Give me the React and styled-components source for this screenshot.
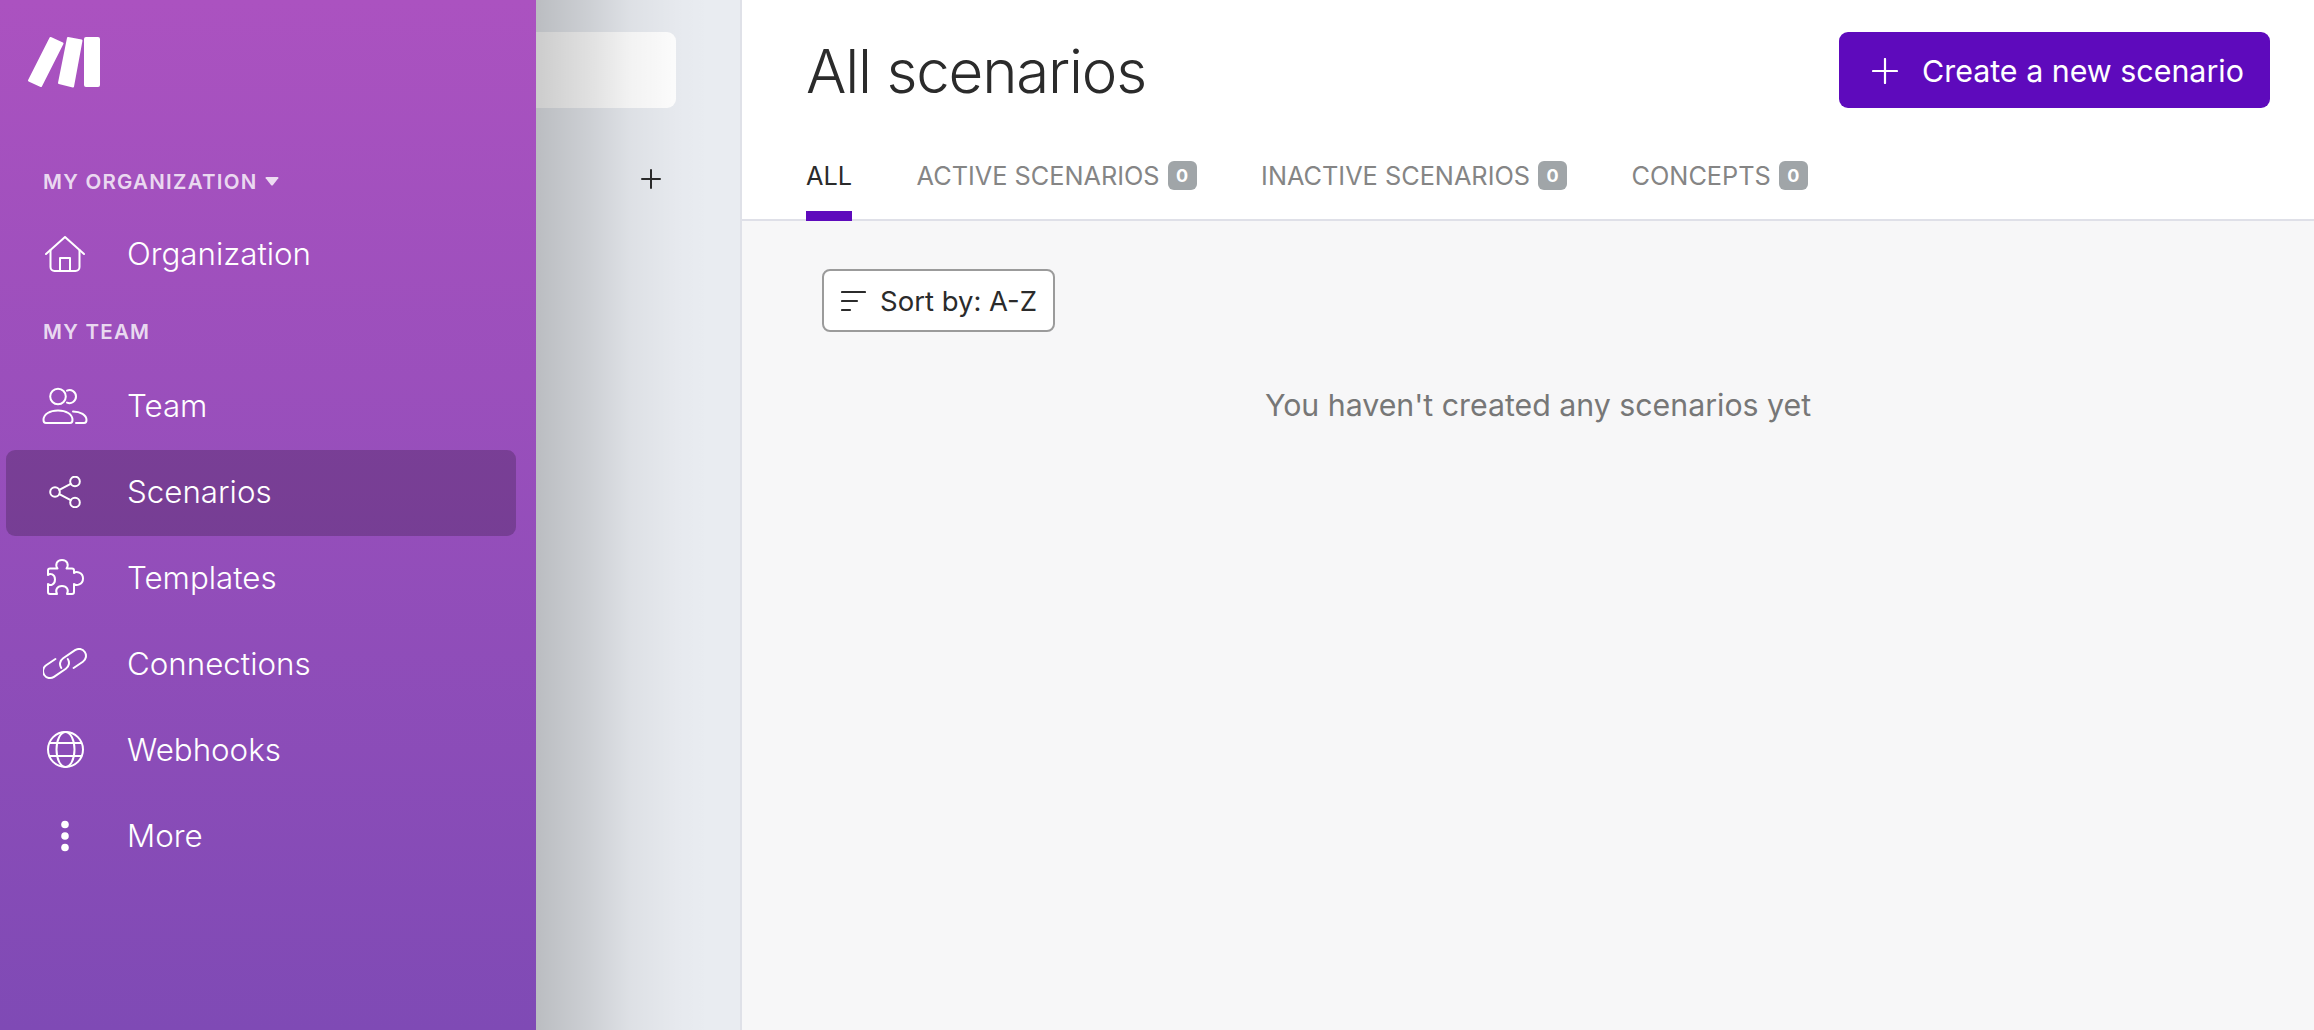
import styled, { createGlobalStyle } from 'styled-components';

const GlobalStyle = createGlobalStyle`
  html, body {
    margin: 0;
    height: 100%;
    overflow: hidden;
  }
  body {
    font-family: Inter, 'Liberation Sans', sans-serif;
    color: #2b2b2b;
  }
`;

const Page = styled.div`
  display: flex;
  width: 2314px;
  height: 1030px;
  overflow: hidden;
`;

const Sidebar = styled.aside`
  box-sizing: border-box;
  flex: 0 0 536px;
  height: 100%;
  padding: 36px 20px 0 6px;
  background: linear-gradient(180deg, #ab52c0 0%, #7f4ab5 100%);
  color: #fff;
`;

const Logo = styled.svg`
  display: block;
  width: 74px;
  height: 52px;
  margin-left: 21px;
  fill: #fff;
  stroke: #fff;
  stroke-width: 2;
  stroke-linejoin: round;
`;

const SectionLabel = styled.div`
  display: flex;
  align-items: center;
  gap: 7px;
  height: ${({ $height }) => $height}px;
  padding: ${({ $top }) => $top || 0}px 0 0 37px;
  box-sizing: border-box;
  font-size: 20.5px;
  font-weight: 600;
  letter-spacing: 1.25px;
  color: rgba(255, 255, 255, 0.8);
`;

const Caret = styled.svg`
  width: 14px;
  height: 9px;
  fill: rgba(255, 255, 255, 0.8);
`;

const NavList = styled.nav`
  display: flex;
  flex-direction: column;
`;

const NavItem = styled.a`
  display: flex;
  align-items: center;
  height: 86px;
  padding: 0 0 3px 36px;
  box-sizing: border-box;
  border-radius: 9px;
  background: ${({ $active }) => ($active ? 'rgba(0, 0, 0, 0.2)' : 'transparent')};
  font-size: 31.3px;
  font-weight: 300;
  color: #fff;
`;

const IconSlot = styled.span`
  display: flex;
  align-items: center;
  justify-content: center;
  flex: 0 0 46px;
  margin-right: 39px;
`;

const NavIcon = styled.svg`
  display: block;
  fill: none;
  stroke: #fff;
  stroke-width: 2;
  stroke-linecap: round;
  stroke-linejoin: round;
`;

const MiddlePanel = styled.section`
  position: relative;
  box-sizing: border-box;
  flex: 0 0 206px;
  height: 100%;
  padding-top: 32px;
  background: #e9ecf1;
  border-right: 2px solid #dfe1e8;

  &::after {
    content: '';
    position: absolute;
    inset: 0;
    background: linear-gradient(90deg, rgba(0, 0, 0, 0.2) 0%, rgba(0, 0, 0, 0.12) 26%, rgba(0, 0, 0, 0.05) 46%, rgba(0, 0, 0, 0.01) 70%, transparent 85%);
  }
`;

const SearchBox = styled.div`
  width: 140px;
  height: 76px;
  background: #fff;
  border-radius: 0 9px 9px 0;
`;

const AddFolder = styled.div`
  display: flex;
  justify-content: flex-end;
  padding: 61px 79px 0 0;
  line-height: 0;
`;

const Main = styled.main`
  flex: 1;
  display: flex;
  flex-direction: column;
  height: 100%;
  background: #f7f7f8;
`;

const Header = styled.header`
  box-sizing: border-box;
  height: 221px;
  padding: 32px 44px 0 64px;
  background: #fff;
  border-bottom: 2px solid #dfe0e8;
`;

const TitleRow = styled.div`
  display: flex;
  justify-content: space-between;
  align-items: flex-start;
`;

const Title = styled.h1`
  margin: 0;
  padding-top: 2px;
  font-size: 60px;
  line-height: 74px;
  font-weight: 300;
  letter-spacing: -1.2px;
  color: #2b2b2b;
`;

const PrimaryButton = styled.button`
  display: flex;
  align-items: center;
  gap: 24px;
  box-sizing: border-box;
  width: 431px;
  height: 76px;
  padding: 2px 0 0 33px;
  border: 0;
  border-radius: 9px;
  background: #5e0abc;
  color: #fff;
  font-family: inherit;
  font-size: 30.4px;
  font-weight: 400;
`;

const Tabs = styled.div`
  display: flex;
  gap: 64.5px;
  margin-top: 36px;
`;

const Tab = styled.div`
  position: relative;
  display: flex;
  align-items: center;
  gap: 8px;
  height: 76px;
  padding-bottom: 13px;
  box-sizing: border-box;
  font-size: 25.3px;
  font-weight: 400;
  color: ${({ $active }) => ($active ? '#2b2b2b' : '#858585')};

  ${({ $active }) =>
    $active &&
    `&::after {
      content: '';
      position: absolute;
      left: 0;
      right: 0;
      bottom: -1px;
      height: 10px;
      background: #5e0abc;
    }`}
`;

const Badge = styled.span`
  display: flex;
  align-items: center;
  justify-content: center;
  width: 29px;
  height: 29px;
  border-radius: 6px;
  background: #a0a5a8;
  color: #fff;
  font-size: 18px;
  font-weight: 700;
`;

const Content = styled.div`
  padding: 48px 60px 0 80px;
`;

const SortButton = styled.button`
  display: flex;
  align-items: center;
  gap: 14px;
  box-sizing: border-box;
  width: 233px;
  height: 63px;
  padding: 0 0 0 17px;
  border: 2px solid #9b9b9b;
  border-radius: 8px;
  background: #fff;
  color: #2b2b2b;
  font-family: inherit;
  font-size: 27.5px;
`;

const EmptyText = styled.p`
  margin: 55px 0 0;
  text-align: center;
  font-size: 30.3px;
  font-weight: 400;
  color: #777;
`;

const icons = {
  home: (
    <NavIcon width="40" height="36" viewBox="0 0 40 36">
      <path d="M1 18 20 1l19 17" />
      <path d="M5.5 14v17a4 4 0 0 0 4 4h21a4 4 0 0 0 4-4V14" />
      <path d="M15 35V22h10v13" />
    </NavIcon>
  ),
  team: (
    <NavIcon width="46" height="38" viewBox="0 0 46 38">
      <circle cx="16" cy="9.5" r="7.8" />
      <path d="M25 3.6a6.5 6.5 0 1 1 0 12" />
      <path d="M1.5 33C1.5 27 8 23.5 16 23.5S30.5 27 30.5 33q0 3-2.5 3H4q-2.5 0-2.5-3Z" />
      <path d="M31 24.5c7.5 0 13.5 3.5 13.5 8.5q0 3-2.500 3h-8" />
    </NavIcon>
  ),
  share: (
    <NavIcon width="32" height="32" viewBox="0 0 32 32">
      <circle cx="26" cy="5.5" r="4.8" />
      <circle cx="6" cy="16" r="4.8" />
      <circle cx="26" cy="26.5" r="4.8" />
      <path d="M10.3 13.8 21.7 7.8M10.3 18.2l11.4 6" />
    </NavIcon>
  ),
  puzzle: (
    <NavIcon width="37" height="37" viewBox="0 0 37 37">
      <path d="M3 9.5h7.5C8 6 9.5 1 15 1s7 5 4.500 8.500H25q2 0 2 2V14c2-2 9-1 9 5.500S29 27 27 25v8q0 2-2 2h-5c2-4 0-8-5-8s-7 4-5 8H3q-2 0-2-2v-8c2 2 7 1 7-4.500S3 14 1 16v-4.500q0-2 2-2Z" />
    </NavIcon>
  ),
  link: (
    <NavIcon width="44" height="32" viewBox="0 0 44 32">
      <g transform="rotate(-34 13 19)">
        <path d="M17 12H5.800a7 7 0 0 0 0 14h14.400a7 7 0 0 0 7-7" />
      </g>
      <g transform="rotate(-34 30 12)">
        <path d="M26 19h11.200a7 7 0 0 0 0-14H22.800a7 7 0 0 0-7 7" />
      </g>
    </NavIcon>
  ),
  globe: (
    <NavIcon width="37" height="37" viewBox="0 0 37 37">
      <circle cx="18.5" cy="18.5" r="17.500" />
      <ellipse cx="18.5" cy="18.500" rx="9" ry="17.500" />
      <path d="M3 12h31M3 25h31" />
    </NavIcon>
  ),
  more: (
    <svg width="8" height="32" viewBox="0 0 8 32" fill="#fff">
      <circle cx="4" cy="4.500" r="3.800" />
      <circle cx="4" cy="16" r="3.800" />
      <circle cx="4" cy="27.500" r="3.800" />
    </svg>
  ),
};

const topItems = [{ label: 'Organization', icon: 'home' }];

const teamItems = [
  { label: 'Team', icon: 'team' },
  { label: 'Scenarios', icon: 'share', active: true },
  { label: 'Templates', icon: 'puzzle' },
  { label: 'Connections', icon: 'link' },
  { label: 'Webhooks', icon: 'globe' },
  { label: 'More', icon: 'more' },
];

const tabs = [
  { label: 'ALL', active: true },
  { label: 'ACTIVE SCENARIOS', count: 0 },
  { label: 'INACTIVE SCENARIOS', count: 0 },
  { label: 'CONCEPTS', count: 0 },
];

const renderItem = ({ label, icon, active }) => (
  <NavItem key={label} $active={active}>
    <IconSlot>{icons[icon]}</IconSlot>
    {label}
  </NavItem>
);

const App = () => (
  <Page>
    <GlobalStyle />
    <Sidebar>
      <Logo viewBox="0 0 74 52">
        <polygon points="23.500,2 35.500,7.500 14,50 2,44.500" />
        <polygon points="41,2 54.500,4.500 46,50.500 32,47" />
        <rect x="58" y="2" width="14" height="48" rx="1" />
      </Logo>
      <SectionLabel $height={124} $top={62}>
        MY ORGANIZATION
        <Caret viewBox="0 0 14 9">
          <path d="M1.500 0h11q1.500 0 .8 1.300L8 8q-1 1-2 0L.7 1.300Q0 0 1.500 0Z" />
        </Caret>
      </SectionLabel>
      <NavList>{topItems.map(renderItem)}</NavList>
      <SectionLabel $height={66}>MY TEAM</SectionLabel>
      <NavList>{teamItems.map(renderItem)}</NavList>
    </Sidebar>
    <MiddlePanel>
      <SearchBox />
      <AddFolder>
        <svg width="20" height="20" viewBox="0 0 20 20" stroke="#2b2b2b" strokeWidth="2" strokeLinecap="round">
          <path d="M10 1v18M1 10h18" />
        </svg>
      </AddFolder>
    </MiddlePanel>
    <Main>
      <Header>
        <TitleRow>
          <Title>All scenarios</Title>
          <PrimaryButton>
            <svg width="26" height="26" viewBox="0 0 26 26" stroke="#fff" strokeWidth="2.200" strokeLinecap="round">
              <path d="M13 1v24M1 13h24" />
            </svg>
            Create a new scenario
          </PrimaryButton>
        </TitleRow>
        <Tabs>
          {tabs.map(({ label, active, count }) => (
            <Tab key={label} $active={active}>
              {label}
              {count !== undefined && <Badge>{count}</Badge>}
            </Tab>
          ))}
        </Tabs>
      </Header>
      <Content>
        <SortButton>
          <svg width="25" height="22" viewBox="0 0 25 22" stroke="#2b2b2b" strokeWidth="2.200" strokeLinecap="round">
            <path d="M1 2h23M1 11h15M1 20h8" />
          </svg>
          Sort by: A-Z
        </SortButton>
        <EmptyText>You haven't created any scenarios yet</EmptyText>
      </Content>
    </Main>
  </Page>
);

export default App;
